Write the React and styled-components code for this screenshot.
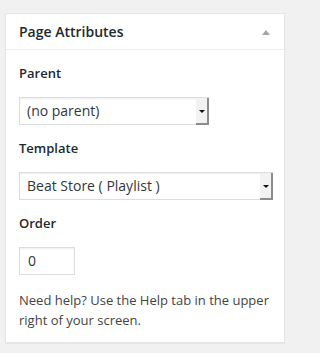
import React from "react";
import styled, { createGlobalStyle } from "styled-components";

const Global = createGlobalStyle`
  html, body { margin: 0; padding: 0; background: #f1f1f1; }
  body { font-family: "Open Sans", "Liberation Sans", sans-serif; color: #444; }
  #root { padding: 13px 12px 11px 5px; }
`;

const Panel = styled.div`
  width: 278px;
  background: #fff;
  border: 1px solid #e5e5e5;
  box-shadow: 0 1px 1px rgba(0, 0, 0, 0.04);
`;

const Header = styled.div`
  height: 35px;
  border-bottom: 1px solid #eee;
  display: flex;
  align-items: center;
  justify-content: space-between;
  padding: 0 13px 0 13px;
`;

const Title = styled.h2`
  margin: 0;
  font-size: 14px;
  font-weight: 600;
  color: #23282d;
  line-height: 1.4;
`;

const Toggle = styled.span`
  width: 0;
  height: 0;
  border-left: 4px solid transparent;
  border-right: 4px solid transparent;
  border-bottom: 5px solid #a0a5aa;
  margin-right: 1px;
  margin-top: 1px;
`;

const Body = styled.div`
  padding: 13px 12px 12px 13px;
`;

const Label = styled.p`
  margin: 0 0 14px 0;
  font-size: 13px;
  font-weight: 600;
  line-height: 20px;
  color: #23282d;
`;

const Select = styled.div`
  box-sizing: border-box;
  width: ${(p) => p.$w}px;
  height: 28px;
  display: flex;
  align-items: stretch;
  border: 1px solid #ddd;
  background: #fff;
  box-shadow: inset 0 1px 2px rgba(0, 0, 0, 0.07);
  margin-bottom: 13px;
`;

const SelectText = styled.span`
  flex: 1;
  padding-left: 7px;
  font-size: 14px;
  line-height: 25px;
  color: #32373c;
  white-space: nowrap;
`;

const Arrow = styled.span`
  width: 11px;
  background: #f2f2f2;
  border-right: 2px solid #8c8c8c;
  border-bottom: 2px solid #8c8c8c;
  margin-bottom: -1px;
  margin-right: -1px;
  display: flex;
  align-items: center;
  justify-content: center;
  &::after {
    content: "";
    width: 0;
    height: 0;
    border-left: 3px solid transparent;
    border-right: 3px solid transparent;
    border-top: 3px solid #111;
    margin-top: 1px;
  }
`;

const Input = styled.div`
  box-sizing: border-box;
  width: 56px;
  height: 28px;
  border: 1px solid #ddd;
  box-shadow: inset 0 1px 2px rgba(0, 0, 0, 0.07);
  font-size: 14px;
  line-height: 26px;
  padding-left: 8px;
  color: #32373c;
  margin-bottom: 15px;
`;

const Help = styled.p`
  margin: 0;
  font-size: 13px;
  line-height: 20px;
  color: #444;
`;

export default function App() {
  return (
    <>
      <Global />
      <Panel>
        <Header>
          <Title>Page Attributes</Title>
          <Toggle />
        </Header>
        <Body>
          <Label>Parent</Label>
          <Select $w={190}>
            <SelectText>(no parent)</SelectText>
            <Arrow />
          </Select>
          <Label>Template</Label>
          <Select $w={254}>
            <SelectText>Beat Store ( Playlist )</SelectText>
            <Arrow />
          </Select>
          <Label>Order</Label>
          <Input>0</Input>
          <Help>Need help? Use the Help tab in the upper right of your screen.</Help>
        </Body>
      </Panel>
    </>
  );
}
